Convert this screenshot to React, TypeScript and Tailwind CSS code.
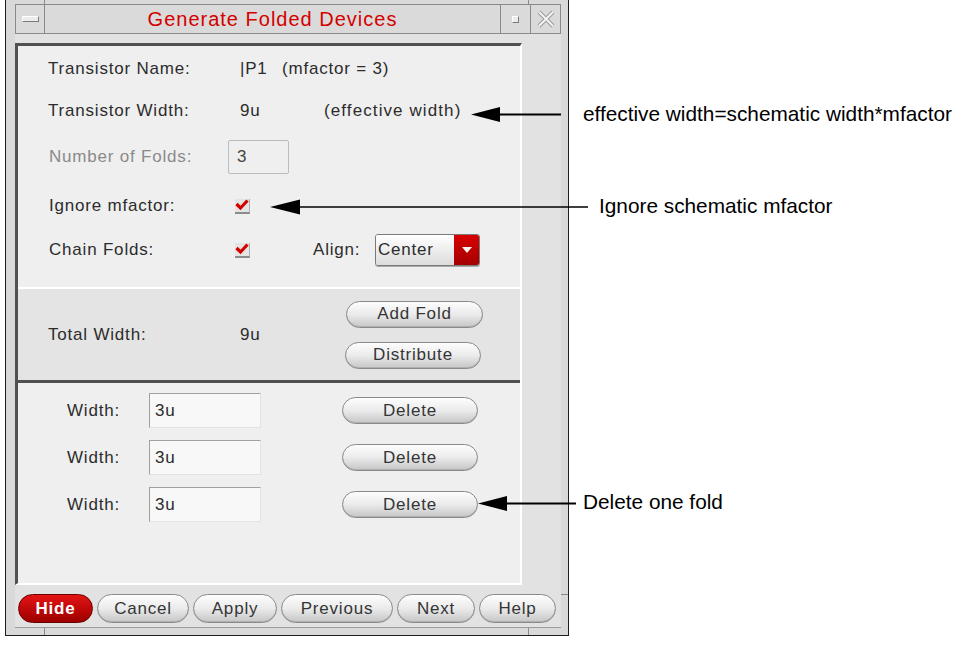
import React from 'react'

// Small pill-shaped Motif/Qt style button
const Pill = ({ label, className }: { label: string; className: string }) => (
  <div
    className={`flex items-center justify-center rounded-full border border-[#8a8a8a] bg-linear-to-b from-[#fdfdfd] via-[#ebebeb] to-[#c6c6c6] text-[#353535] shadow-[inset_0_-1px_0_#b0b0b0] ${className}`}
  >
    {label}
  </div>
)

const Check = () => (
  <div className="flex h-[15px] w-[15px] items-start justify-center border-r border-b-2 border-r-[#b0b0b0] border-b-[#8c8c8c] bg-[#e4e4e4]">
    <svg width="14" height="12" viewBox="0 0 14 12">
      <path d="M1.5 5 L5.5 9 L12.5 1.5" stroke="#d40000" strokeWidth="3.2" fill="none" />
    </svg>
  </div>
)

const WidthRow = () => (
  <div className="flex h-[35px] items-center">
    <span className="w-[82px]">Width:</span>
    <div className="flex h-[35px] w-[112px] items-center border border-t-[#a0a0a0] border-l-[#a0a0a0] border-r-[#e2e2e2] border-b-[#e2e2e2] bg-[#f8f8f8] pl-[5px]">
      3u
    </div>
    <Pill label="Delete" className="ml-[81px] h-[27px] w-[136px]" />
  </div>
)

const Window = () => (
  <div className="relative ml-[5px] h-[636px] w-[564px] border-x border-b border-[#1e1e1e] bg-[#d9d9d9] pt-[4px] pr-[7px] pl-[9px] text-[17px] tracking-[0.8px] text-[#2c2c2c]">
    {/* frame handles */}
    <div className="absolute top-0 left-[38px] h-[4px] w-px bg-[#8a8a8a]" />
    <div className="absolute top-0 left-[522px] h-[4px] w-px bg-[#8a8a8a]" />
    <div className="absolute bottom-0 left-[38px] h-[7px] w-px bg-[#8a8a8a]" />
    <div className="absolute bottom-0 left-[522px] h-[7px] w-px bg-[#8a8a8a]" />
    <div className="absolute top-[594px] right-0 h-px w-[7px] bg-[#8a8a8a]" />

    {/* title bar */}
    <div className="flex h-[30px] border-y border-[#8a8a8a] bg-[#dadada]">
      <div className="flex w-[30px] items-center justify-center border-x border-[#8a8a8a]">
        <div className="h-[6px] w-[17px] border border-t-white border-l-white border-r-[#7a7a7a] border-b-[#7a7a7a] bg-[#ececec]" />
      </div>
      <div className="flex flex-1 items-center justify-center text-[20px] tracking-[1px] text-[#d40000]">
        Generate Folded Devices
      </div>
      <div className="flex w-[30px] items-center justify-center border-l border-[#8a8a8a]">
        <div className="h-[7px] w-[7px] border border-t-white border-l-white border-r-[#7a7a7a] border-b-[#7a7a7a] bg-[#ececec]" />
      </div>
      <div className="flex w-[31px] items-center justify-center border-x border-[#8a8a8a]">
        <svg width="18" height="18" viewBox="0 0 18 18">
          <path d="M2 2 L16 16 M16 2 L2 16" stroke="#9a9a9a" strokeWidth="4" />
          <path d="M2 2 L16 16 M16 2 L2 16" stroke="#f4f4f4" strokeWidth="2" />
        </svg>
      </div>
    </div>

    {/* body */}
    <div className="h-[594px] border-b border-[#9a9a9a] bg-[#e2e2e2] pt-[9px]">
      <div className="w-[507px] border-t-[3px] border-r-2 border-b-2 border-l-[3px] border-t-[#505050] border-r-white border-b-white border-l-[#505050]">
        {/* main settings */}
        <div className="h-[243px] border-b-2 border-white bg-[#efefef] pt-[6px] pl-[30px]">
          <div className="flex h-[34px] items-center">
            <span className="w-[192px]">Transistor Name:</span>
            <span className="w-[42px]">|P1</span>
            <span>(mfactor = 3)</span>
          </div>
          <div className="mt-[8px] flex h-[34px] items-center">
            <span className="w-[192px]">Transistor Width:</span>
            <span className="w-[84px]">9u</span>
            <span className="tracking-[1.1px]">(effective width)</span>
          </div>
          <div className="mt-[12px] flex h-[34px] items-center">
            <span className="w-[180px] pl-px text-[#8a8a8a]">Number of Folds:</span>
            <div className="flex h-[34px] w-[61px] items-center rounded-[2px] border border-[#bcbcbc] pl-[8px] text-[#444]">
              3
            </div>
          </div>
          <div className="mt-[15px] flex h-[34px] items-center">
            <span className="w-[187px] pl-px">Ignore mfactor:</span>
            <Check />
          </div>
          <div className="mt-[10px] flex h-[34px] items-center">
            <span className="w-[187px] pl-px">Chain Folds:</span>
            <Check />
            <span className="ml-[63px] w-[62px]">Align:</span>
            <div className="flex h-[32px] w-[105px] overflow-hidden rounded-[3px] border border-[#7a7a7a] shadow-[0_1px_0_#aaa]">
              <div className="flex flex-1 items-start bg-linear-to-b from-white to-[#dcdcdc] pt-[2px] pl-[2px]">
                Center
              </div>
              <div className="flex w-[25px] items-center justify-center bg-linear-to-b from-[#d80000] to-[#a40000]">
                <svg width="10" height="6" viewBox="0 0 10 6">
                  <path d="M0 0 H10 L5 6 Z" fill="#f4f4f4" />
                </svg>
              </div>
            </div>
          </div>
        </div>

        {/* total width */}
        <div className="flex h-[91px] items-center bg-[#e4e4e4] pl-[30px]">
          <span className="w-[192px]">Total Width:</span>
          <span className="w-[105px]">9u</span>
          <div className="flex flex-col gap-[14px]">
            <Pill label="Add Fold" className="ml-px h-[27px] w-[137px]" />
            <Pill label="Distribute" className="h-[27px] w-[136px]" />
          </div>
        </div>

        {/* folds */}
        <div className="flex h-[203px] flex-col gap-[12px] border-t-[3px] border-[#505050] bg-[#efefef] pt-[10px] pl-[49px]">
          <WidthRow />
          <WidthRow />
          <WidthRow />
        </div>
      </div>

      {/* button row */}
      <div className="flex gap-[4px] pt-[9px] pl-[3px]">
        <div className="flex h-[29px] w-[75px] items-center justify-center rounded-full border border-[#6a0000] bg-linear-to-b from-[#e41414] to-[#9e0000] font-bold text-white">
          Hide
        </div>
        <Pill label="Cancel" className="h-[29px] w-[92px]" />
        <Pill label="Apply" className="h-[29px] w-[84px]" />
        <Pill label="Previous" className="h-[29px] w-[112px]" />
        <Pill label="Next" className="h-[29px] w-[78px]" />
        <Pill label="Help" className="h-[29px] w-[77px]" />
      </div>
    </div>
  </div>
)

const Annotations = () => (
  <>
    <svg className="pointer-events-none absolute top-0 left-0" width="975" height="647">
      <line x1="499" y1="114.5" x2="561" y2="114.5" stroke="#000" strokeWidth="2" />
      <polygon points="471,114.5 500,107 500,122" fill="#000" />
      <line x1="299" y1="207" x2="588" y2="207" stroke="#000" strokeWidth="1.6" />
      <polygon points="270,207 300,199.5 300,214.5" fill="#000" />
      <line x1="506" y1="503.5" x2="576" y2="503.5" stroke="#000" strokeWidth="2" />
      <polygon points="478,503.5 507,496 507,511" fill="#000" />
    </svg>
    <span className="absolute top-[102px] left-[583px] text-[20.8px] leading-[24px] text-black">
      effective width=schematic width*mfactor
    </span>
    <span className="absolute top-[194px] left-[599px] text-[20.8px] leading-[24px] text-black">
      Ignore schematic mfactor
    </span>
    <span className="absolute top-[490px] left-[583px] text-[20.8px] leading-[24px] text-black">
      Delete one fold
    </span>
  </>
)

export default function App() {
  return (
    <div className="relative h-[647px] w-[975px] overflow-hidden bg-white font-['Liberation_Sans',Arial,sans-serif]">
      <Window />
      <Annotations />
    </div>
  )
}
